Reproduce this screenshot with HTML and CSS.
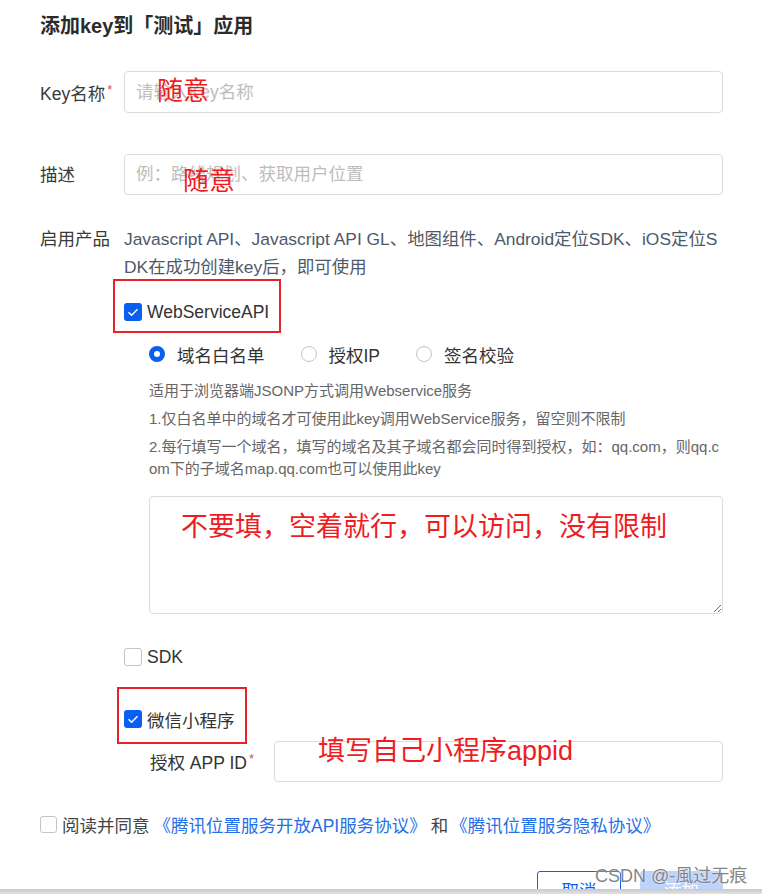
FILE: index.html
```html
<!DOCTYPE html>
<html lang="zh-CN">
<head>
<meta charset="utf-8">
<title>添加key</title>
<link rel="stylesheet" href="styles.css">
</head>
<body>
<div class="dialog">
  <h1 class="title">添加key到「测试」应用</h1>

  <div class="row r-name">
    <label class="lbl">Key名称<span class="req">*</span></label>
    <input class="inp" placeholder="请输入Key名称">
  </div>

  <div class="row r-desc">
    <label class="lbl">描述</label>
    <input class="inp" placeholder="例：路线规划、获取用户位置">
  </div>

  <div class="row r-prod">
    <label class="lbl">启用产品</label>
    <div class="ctl">
      <div class="prod-desc">Javascript API、Javascript API GL、地图组件、Android定位SDK、iOS定位SDK在成功创建key后，即可使用</div>

      <div class="chk-row web-row">
        <span class="cb on"><svg width="18" height="18" viewBox="0 0 18 18"><polyline points="4.5,9.2 7.6,12.2 13.5,6.3" fill="none" stroke="#fff" stroke-width="1.4"/></svg></span>
        <span>WebServiceAPI</span>
      </div>

      <div class="radios">
        <span class="radio-item"><span class="radio on"></span>域名白名单</span>
        <span class="radio-item"><span class="radio"></span>授权IP</span>
        <span class="radio-item"><span class="radio"></span>签名校验</span>
      </div>

      <div class="help">
        <p>适用于浏览器端JSONP方式调用Webservice服务</p>
        <p>1.仅白名单中的域名才可使用此key调用WebService服务，留空则不限制</p>
        <p>2.每行填写一个域名，填写的域名及其子域名都会同时得到授权，如：qq.com，则qq.com下的子域名map.qq.com也可以使用此key</p>
      </div>

      <textarea class="ta"></textarea>

      <div class="chk-row sdk-row">
        <span class="cb off"></span>
        <span>SDK</span>
      </div>

      <div class="chk-row wx-row">
        <span class="cb on"><svg width="18" height="18" viewBox="0 0 18 18"><polyline points="4.5,9.2 7.6,12.2 13.5,6.3" fill="none" stroke="#fff" stroke-width="1.4"/></svg></span>
        <span>微信小程序</span>
      </div>

      <div class="appid-row">
        <label class="lbl2">授权 APP ID<span class="req">*</span></label>
        <input class="inp inp2">
      </div>
    </div>
  </div>

  <div class="agree">
    <span class="cb off sm"></span>
    <span>阅读并同意</span>
    <a class="lnk first">《腾讯位置服务开放API服务协议》</a>
    <span class="and">和</span>
    <a class="lnk">《腾讯位置服务隐私协议》</a>
  </div>

  <div class="btns">
    <button class="btn cancel">取消</button>
    <button class="btn ok">添加</button>
  </div>

  <div class="mark box1"></div>
  <div class="mark box2"></div>
  <div class="note n1">随意</div>
  <div class="note n2">随意</div>
  <div class="note n3">不要填，空着就行，可以访问，没有限制</div>
  <div class="note n4">填写自己小程序appid</div>
  <div class="wm">CSDN @-風过无痕</div>
</div>
<div class="bar"></div>
</body>
</html>
```
FILE: styles.css
```css
* { box-sizing: border-box; }
html, body { margin: 0; background: #fff; }
body {
  font-family: "Liberation Sans", "Noto Sans CJK SC", sans-serif;
  color: #3a3a3a;
  font-size: 17.5px;
}
.dialog {
  position: relative;
  height: 889px;
  overflow: hidden;
  padding: 12px 39px 0 40px;
}
.title {
  margin: 0;
  font-size: 20px;
  line-height: 28px;
  font-weight: 700;
  color: #2b2b2b;
}
.row { display: flex; align-items: center; }
.lbl { width: 84px; flex: none; line-height: 24px; white-space: nowrap; }
.req { color: #e34d59; font-size: 13px; vertical-align: 6px; margin-left: 2px; }
.r-name { margin-top: 31px; }
.r-desc { margin-top: 41px; }
.inp {
  flex: 1;
  min-width: 0;
  height: 42px;
  border: 1px solid #dcdcdc;
  border-radius: 4px;
  padding: 0 11px;
  font-family: inherit;
  font-size: 17.5px;
  color: #333;
  outline: none;
  background: #fff;
}
.r-desc .inp { height: 41px; }
.inp::placeholder { color: #bdbdbd; }
.r-prod { margin-top: 30px; align-items: flex-start; }
.r-prod .lbl { line-height: 28px; }
.ctl { flex: 1; min-width: 0; }
.prod-desc {
  font-size: 17.4px;
  line-height: 28px;
  color: #4e5969;
  word-break: break-all;
}
.chk-row { display: flex; align-items: center; height: 28px; color: #333; }
.cb {
  width: 18px; height: 18px; flex: none;
  border-radius: 3px;
  margin-right: 5px;
  display: block;
}
.cb svg { display: block; }
.cb.on { background: #0b5ff0; }
.cb.off { border: 1px solid #c4c4c4; background: #fff; }
.cb.sm { width: 17px; height: 17px; }
.web-row { margin-top: 17px; }
.radios {
  display: flex; align-items: center;
  height: 28px; margin-top: 14px; padding-left: 25px; color: #333;
}
.radio-item { display: flex; align-items: center; margin-right: 36px; }
.radio {
  width: 16px; height: 16px; border-radius: 50%;
  border: 1px solid #c4c4c4; margin-right: 12px; background: #fff;
}
.radio.on { border: 5px solid #0b5ff0; }
.help {
  padding-left: 25px;
  margin-top: 12px;
  font-size: 15px;
  line-height: 22px;
  color: #666;
  word-break: break-all;
}
.help p { margin: 0; }
.help p + p { margin-top: 6px; }
.ta {
  display: block;
  margin: 16px 0 0 25px;
  width: calc(100% - 25px);
  height: 118px;
  border: 1px solid #dcdcdc;
  border-radius: 4px;
  outline: none;
  font-family: inherit;
}
.sdk-row { margin-top: 29px; }
.wx-row { margin-top: 34px; }
.appid-row { display: flex; align-items: center; margin-top: 8px; padding-left: 26px; }
.lbl2 { width: 124px; flex: none; color: #333; white-space: nowrap; }
.inp2 { height: 41px; }
.agree {
  display: flex; align-items: center;
  height: 28px; margin-top: 28px; color: #444; white-space: nowrap;
}
.lnk { color: #266fe8; cursor: pointer; }
.lnk.first { margin-left: 4px; }
.and { margin: 0 2px 0 4px; }
.btns { display: flex; justify-content: flex-end; gap: 19px; margin-top: 33px; }
.btn {
  width: 84px; height: 36px;
  border-radius: 3px;
  font-family: inherit;
  font-size: 17.5px;
  padding: 0;
}
.btn.cancel { background: #fff; color: #0b5ff0; border: 1px solid #0b5ff0; }
.btn.ok { width: 83px; background: #bcd3fb; color: #fff; border: 1px solid #bcd3fb; }

.mark { position: absolute; border: 2px solid #e5232b; }
.box1 { left: 113px; top: 279px; width: 168px; height: 54px; }
.box2 { left: 117px; top: 687px; width: 130px; height: 57px; }
.note {
  position: absolute;
  color: #ee1d23;
  font-family: "Noto Sans CJK SC", "Liberation Sans", sans-serif;
  white-space: nowrap;
  line-height: 1;
}
.n1 { left: 157px; top: 76px; font-size: 26px; }
.n2 { left: 183px; top: 166px; font-size: 26px; }
.n3 { left: 181px; top: 511px; font-size: 27px; }
.n4 { left: 318px; top: 738px; font-size: 27px; font-family: "Liberation Sans", "Noto Sans CJK SC", sans-serif; }
.wm {
  position: absolute;
  left: 595px; top: 865px;
  font-size: 18px; line-height: 22px;
  color: rgba(110, 110, 110, 0.85);
  white-space: nowrap;
  text-shadow: 0 0 2px #fff;
}
.bar {
  height: 5px;
  background: linear-gradient(#c9c9c9, #e2e2e2);
}
```
